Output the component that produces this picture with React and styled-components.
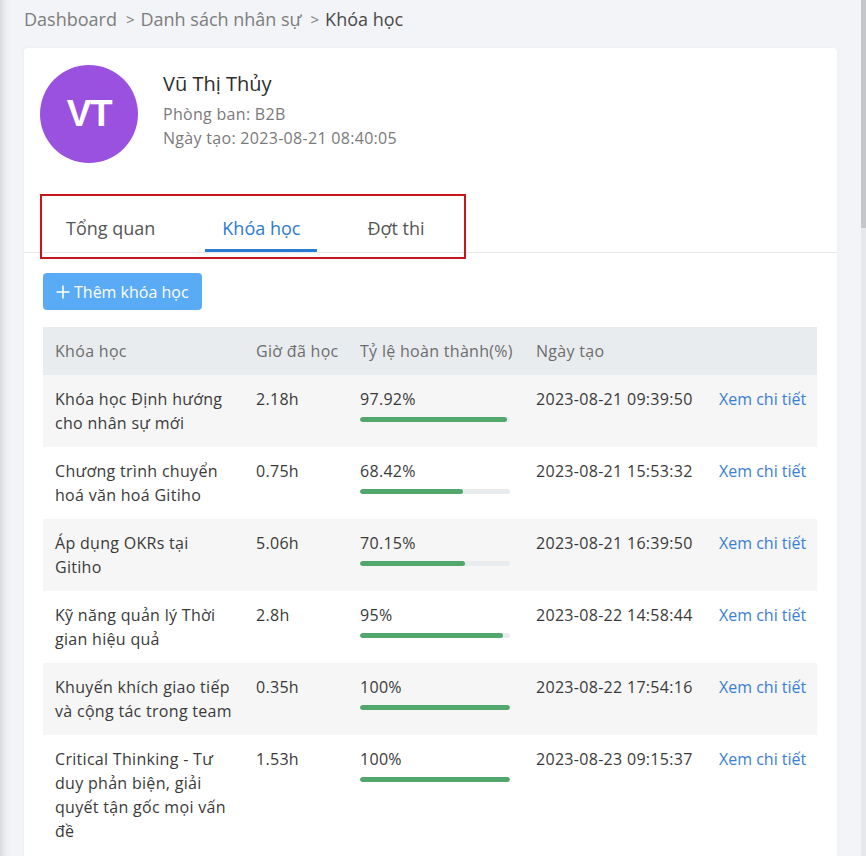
import React from "react";
import styled, { createGlobalStyle } from "styled-components";

const Global = createGlobalStyle`
  html, body { margin: 0; padding: 0; }
  body {
    font-family: "Open Sans", "Noto Sans", sans-serif;
    background: #f3f4f7;
    color: #333;
    overflow: hidden;
  }
`;

const Page = styled.div`
  display: flex;
  height: 856px;
  overflow: hidden;
  background: linear-gradient(to right, #d9dadd 0px, #eceef1 6px, #f3f4f7 10px);
`;

const Main = styled.main`
  flex: 1;
  padding: 0 24px;
  min-width: 0;
`;

const ScrollTrack = styled.div`
  width: 5px;
  background: #e6e8eb;
  display: flex;
  flex-direction: column;
`;

const ScrollThumb = styled.div`
  height: 228px;
  background: #c4c6ca;
`;

const Breadcrumb = styled.nav`
  display: flex;
  align-items: center;
  height: 38px;
  font-size: 18px;
  color: #7d7d7d;
  gap: 6px;
`;

const Crumb = styled.span`
  color: ${(p) => (p.$current ? "#4a4a4a" : "#7d7d7d")};
`;

const Sep = styled.span`
  color: #7d7d7d;
  font-size: 15px;
  margin: 0 0 0 3px;
`;

const Card = styled.section`
  margin-top: 10px;
  background: #fff;
  border-radius: 4px;
  box-shadow: 0 0 2px rgba(0, 0, 0, 0.06);
  padding-bottom: 4px;
`;

const Profile = styled.div`
  display: flex;
  align-items: flex-start;
  gap: 25px;
  padding: 17px 16px 0;
`;

const Avatar = styled.div`
  width: 98px;
  height: 98px;
  border-radius: 50%;
  background: #9b51e0;
  color: #fff;
  display: flex;
  align-items: center;
  justify-content: center;
  font-family: "Liberation Sans", Arial, sans-serif;
  font-weight: 700;
  font-size: 37px;
  letter-spacing: -1.5px;
`;

const Info = styled.div`
  display: flex;
  flex-direction: column;
  padding-top: 5px;
`;

const Name = styled.div`
  font-size: 20px;
  line-height: 28px;
  color: #2d2d2d;
  margin-bottom: 4px;
`;

const Meta = styled.div`
  font-size: 16px;
  letter-spacing: 0.3px;
  line-height: 24px;
  color: #7a7a7a;
`;

const TabsWrap = styled.div`
  position: relative;
  margin-top: 42px;
  border-bottom: 1px solid #e6e8eb;
  padding-left: 25px;
  display: flex;
`;

const Tab = styled.div`
  padding: 11px 17px 9px;
  margin-right: 33px;
  font-size: 18px;
  line-height: 24px;
  color: ${(p) => (p.$active ? "#2c7bd3" : "#555")};
  border-bottom: 3px solid ${(p) => (p.$active ? "#2c7bd3" : "transparent")};
`;

const Highlight = styled.div`
  position: absolute;
  left: 16px;
  top: -11px;
  width: 422px;
  height: 61px;
  border: 2px solid #c8141b;
  pointer-events: none;
`;

const Body = styled.div`
  padding: 20px 20px 0 19px;
`;

const AddButton = styled.button`
  display: inline-flex;
  align-items: center;
  gap: 4px;
  height: 37px;
  padding: 0 13px;
  border: none;
  border-radius: 4px;
  background: #5aabf5;
  color: #fff;
  font-family: inherit;
  font-size: 16px;
`;

const Table = styled.table`
  margin-top: 17px;
  width: 100%;
  border-collapse: collapse;
  table-layout: fixed;
  font-size: 16px;
  letter-spacing: 0.3px;
`;

const Th = styled.th`
  text-align: left;
  font-weight: 400;
  color: #6d6d6d;
  background: #e9ecef;
  height: 48px;
  padding: 0 12px;
  box-sizing: border-box;
  white-space: nowrap;
`;

const Row = styled.tr`
  background: ${(p) => (p.$odd ? "#f6f6f6" : "#fff")};
`;

const Td = styled.td`
  vertical-align: top;
  padding: 12px ${(p) => p.$pr ?? 12}px 12px 12px;
  line-height: 24px;
  color: #3a3a3a;
`;

const LinkText = styled.a`
  color: #3a7fd5;
  text-decoration: none;
  white-space: nowrap;
  letter-spacing: 0;
`;

const Track = styled.div`
  margin-top: 6px;
  width: 150px;
  height: 5px;
  border-radius: 3px;
  background: #e9ecef;
  overflow: hidden;
`;

const Fill = styled.div`
  height: 100%;
  background: #52a86a;
  border-radius: 3px;
`;

const rows = [
  ["Khóa học Định hướng cho nhân sự mới", "2.18h", "97.92%", 97.92, "2023-08-21 09:39:50"],
  ["Chương trình chuyển hoá văn hoá Gitiho", "0.75h", "68.42%", 68.42, "2023-08-21 15:53:32"],
  ["Áp dụng OKRs tại Gitiho", "5.06h", "70.15%", 70.15, "2023-08-21 16:39:50"],
  ["Kỹ năng quản lý Thời gian hiệu quả", "2.8h", "95%", 95, "2023-08-22 14:58:44"],
  ["Khuyến khích giao tiếp và cộng tác trong team", "0.35h", "100%", 100, "2023-08-22 17:54:16"],
  ["Critical Thinking - Tư duy phản biện, giải quyết tận gốc mọi vấn đề", "1.53h", "100%", 100, "2023-08-23 09:15:37"],
];

export default function App() {
  return (
    <>
      <Global />
      <Page>
        <Main>
          <Breadcrumb>
            <Crumb>Dashboard</Crumb>
            <Sep>&gt;</Sep>
            <Crumb>Danh sách nhân sự</Crumb>
            <Sep>&gt;</Sep>
            <Crumb $current>Khóa học</Crumb>
          </Breadcrumb>
          <Card>
            <Profile>
              <Avatar>VT</Avatar>
              <Info>
                <Name>Vũ Thị Thủy</Name>
                <Meta>Phòng ban: B2B</Meta>
                <Meta>Ngày tạo: 2023-08-21 08:40:05</Meta>
              </Info>
            </Profile>
            <TabsWrap>
              <Tab>Tổng quan</Tab>
              <Tab $active>Khóa học</Tab>
              <Tab>Đợt thi</Tab>
              <Highlight />
            </TabsWrap>
            <Body>
              <AddButton>
                <svg width="14" height="14" viewBox="0 0 14 14" fill="none" stroke="#fff" strokeWidth="1.6">
                  <path d="M7 0.5v13M0.5 7h13" />
                </svg>
                Thêm khóa học
              </AddButton>
              <Table>
                <colgroup>
                  <col style={{ width: 201 }} />
                  <col style={{ width: 104 }} />
                  <col style={{ width: 176 }} />
                  <col style={{ width: 183 }} />
                  <col style={{ width: 110 }} />
                </colgroup>
                <thead>
                  <tr>
                    <Th>Khóa học</Th>
                    <Th>Giờ đã học</Th>
                    <Th>Tỷ lệ hoàn thành(%)</Th>
                    <Th>Ngày tạo</Th>
                    <Th />
                  </tr>
                </thead>
                <tbody>
                  {rows.map((r, i) => (
                    <Row key={i} $odd={i % 2 === 0}>
                      <Td $pr={9}>{r[0]}</Td>
                      <Td>{r[1]}</Td>
                      <Td>
                        {r[2]}
                        <Track>
                          <Fill style={{ width: `${r[3]}%` }} />
                        </Track>
                      </Td>
                      <Td>{r[4]}</Td>
                      <Td $pr={4}>
                        <LinkText>Xem chi tiết</LinkText>
                      </Td>
                    </Row>
                  ))}
                </tbody>
              </Table>
            </Body>
          </Card>
        </Main>
        <ScrollTrack>
          <ScrollThumb />
        </ScrollTrack>
      </Page>
    </>
  );
}
